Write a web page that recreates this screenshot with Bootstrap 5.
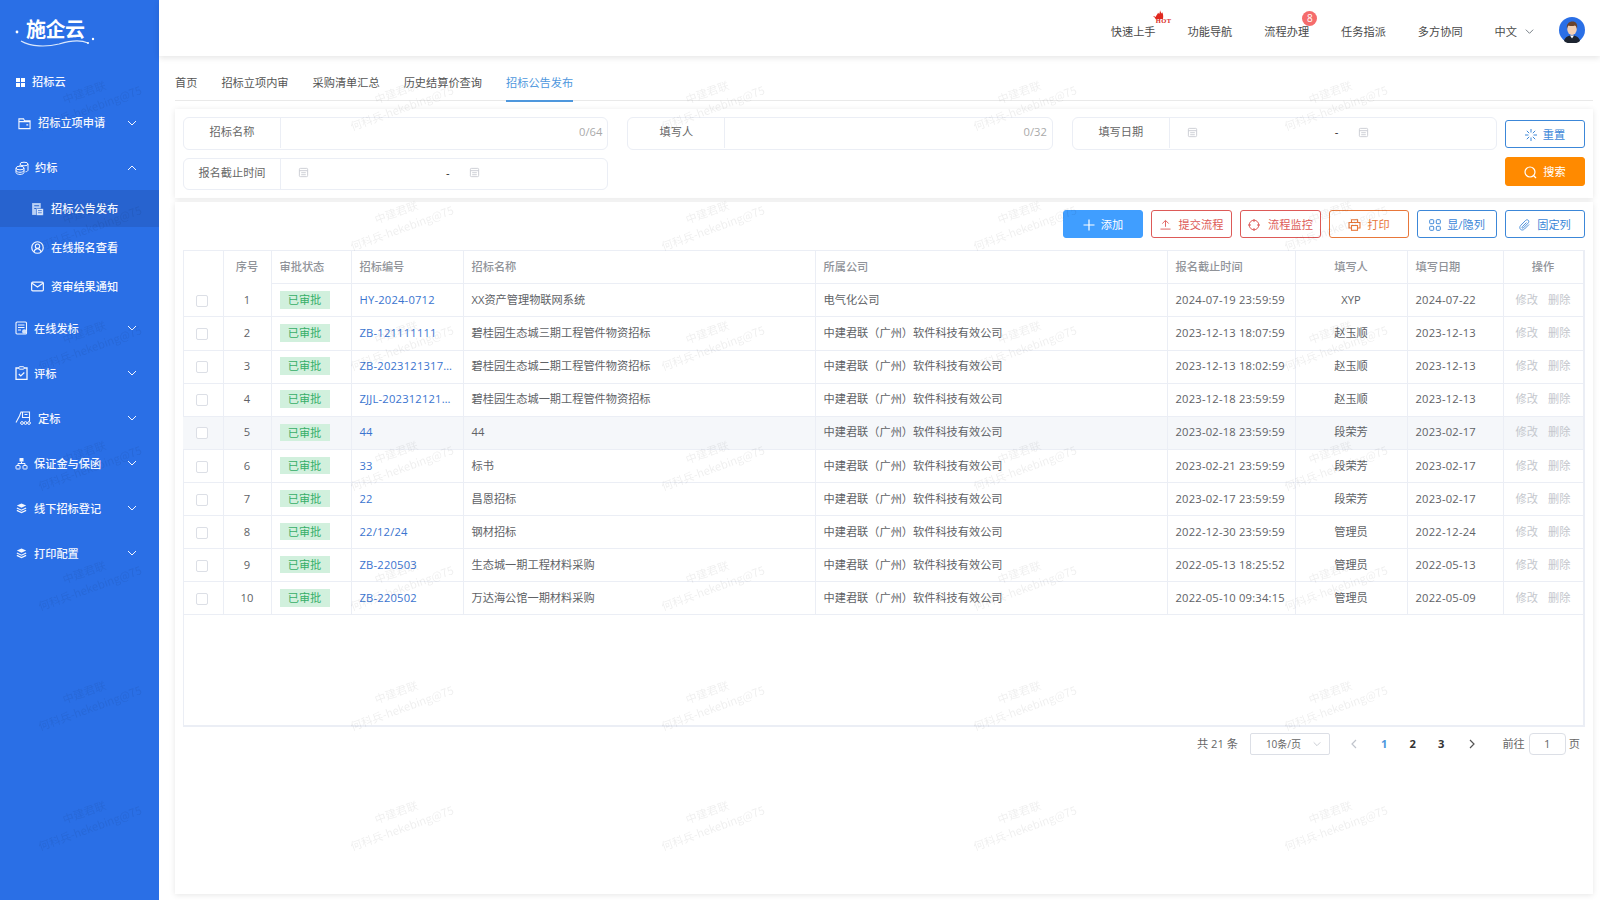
<!DOCTYPE html>
<html lang="zh-CN">
<head>
    <meta charset="UTF-8">
    <meta name="viewport" content="width=device-width, initial-scale=1.0">
    <title>招标公告发布</title>
    <link href="https://cdn.jsdelivr.net/npm/bootstrap@5.3.0/dist/css/bootstrap.min.css" rel="stylesheet">
    <style>
        body { height: 900px; overflow: hidden; background: #fff; color: #606266; font-family: "Open Sans", "Noto Sans CJK SC", sans-serif; font-size: 11.2px; line-height: 1.4; }
        svg { flex: none; display: block; }
        .side-bar { width: 159px; height: 900px; background: #2a6fe6; color: #f4f7fe; font-weight: 500; }
        .logo-box { height: 63px; position: relative; }
        .logo-text { position: absolute; left: 26px; top: 16px; font-size: 20px; font-weight: 700; color: #fff; letter-spacing: -.5px; line-height: 28px; }
        .logo-swoosh { position: absolute; left: 12px; top: 26px; }
        .side-item { height: 45px; padding-right: 21px; }
        .side-item.first { height: 38px; padding-left: 16px; gap: 7px; }
        .side-item.short { height: 44px; }
        .side-item.top { padding-left: 15px; gap: 6px; }
        .side-item.plain { padding-left: 18px; gap: 7px; }
        .side-sub { height: 38.6px; padding-left: 31px; gap: 7px; }
        .side-sub.on { background: #2763cf; height: 37px; margin-bottom: 1.7px; padding-top: 1px; }
        .main-pane { width: 1441px; }
        .top-bar { height: 56px; background: #fff; box-shadow: 0 2px 6px rgba(0,0,0,.1); color: #4a4a4a; padding: 8px 15px 0 0; position: relative; }
        .top-link { position: relative; margin-right: 32px; }
        .hot-tag { position: absolute; left: 42px; top: -14px; }
        .hot-word { position: absolute; left: 45px; top: -7px; font: 700 6.5px/7px "Liberation Serif", serif; color: #d9261c; letter-spacing: .4px; }
        .num-dot { position: absolute; left: 38px; top: -13px; width: 15px; height: 15px; border-radius: 50%; background: #f56c6c; color: #fff; font-size: 10px; line-height: 15px; text-align: center; }
        .lang-box { gap: 7px; margin-right: 24px; }
        .head-face { margin-top: -4px; }
        .body-pane { padding: 0 7px 0 16px; }
        .tab-row { height: 45px; border-bottom: 1px solid #e9e9e9; gap: 24px; color: #555; }
        .tab-link { height: 46px; padding-top: 19px; }
        .tab-link.on { color: #4e97dd; border-bottom: 2px solid #4e97dd; }
        .panel-box { background: #fff; box-shadow: 0 1px 6px rgba(0,0,0,.1); padding: 8px; }
        .filter-panel { margin-top: 8px; height: 89px; }
        .table-panel { margin-top: 4px; height: 692px; }
        .filter-wrap { width: 1316px; gap: 8px 19px; }
        .filter-field { width: 425.4px; height: 32.5px; border: 1px solid #ebeef5; border-radius: 6px; }
        .filter-label { width: 97px; height: 30px; border-right: 1px solid #ebeef5; color: #666; text-align: center; line-height: 28px; }
        .filter-count { margin-left: auto; margin-right: 5px; margin-bottom: 2px; color: #aaa; }
        .date-ico { color: #c9ccd2; margin-left: 17px; margin-bottom: 2px; }
        .date-dash { margin-left: 137px; color: #222; width: 15px; margin-bottom: 2px; }
        .date-dash + .date-ico { margin-left: 8px; }
        .btn-col { padding-top: 3px; }
        .act-btn { width: 80px; height: 28px; padding: 1px 0 0; border-radius: 3px; font-size: 11.2px; gap: 6px; display: flex; align-items: center; justify-content: center; }
        .act-blue { color: #3c87d8; border: 1px solid #3c87d8; background: #fff; }
        .act-red { color: #dd5a58; border: 1px solid #dd5a58; background: #fff; width: 81px; gap: 8px; }
        .act-orange { color: #e8773a; border: 1px solid #e8773a; background: #fff; }
        .act-fill { color: #fff; background: #409eff; border: 1px solid #409eff; }
        .act-search { color: #fff; background: #ff8a00; border: 1px solid #ff8a00; height: 29px; margin-top: 9px; }
        .tool-row { gap: 8px; }
        .table-wrap { margin-top: 12px; width: 1402px; height: 477px; border: 1px solid #ebeef5; border-right-width: 2px; border-bottom-width: 2px; border-top: 0; }
        .data-grid { width: 1400px; table-layout: fixed; margin: 0 0 0 -1px; font-size: 11.2px; --bs-table-color: #606266; }
        .data-grid th, .data-grid td { height: 33.1px; padding: 0 8px 1px; vertical-align: middle; border: 0; border-right: 1px solid #ebeef5; border-bottom: 1px solid #ebeef5; color: #606266; font-weight: 400; }
        .data-grid th { border-top: 1px solid #ebeef5; color: #909399; font-weight: 500; height: 33.4px; }
        .data-grid th.no-line { border-bottom: 0; }
        .data-grid tr.row-hover td { background: #f5f7fa; }
        .col-a { width: 40px; } .col-b { width: 48px; } .col-c { width: 80px; } .col-d { width: 112px; } .col-e { width: 352px; }
        .col-f { width: 128px; } .col-g { width: 96px; }
        .num-text { letter-spacing: .2px; }
        .data-grid .link-text { color: #3a74cf; }
        .state-tag { display: inline-block; width: 50px; height: 17.5px; line-height: 18px; background: #d1f0dd; color: #36ae68; text-align: center; }
        .op-text { color: #c4c7cd; }
        .op-text + .op-text { margin-left: 10px; }
        .data-grid .form-check-input { width: 12px; height: 12px; margin: 3px 0 0 5px; border-color: #dcdfe6; border-radius: 2px; }
        .page-row { margin-top: 5px; height: 24px; padding-right: 5px; color: #666; }
        .page-select { width: 80px; height: 22px; border: 1px solid #dcdfe6; border-radius: 2px; margin-left: 12px; padding: 0 7px 0 15px; font-size: 10px; }
        .page-prev { margin-left: 18px; color: #c0c4cc; }
        .page-next { margin-left: 11px; color: #555; }
        .select-arrow { color: #c0c4cc; }
        .page-num { width: 28.5px; text-align: center; font-weight: 700; color: #333; }
        .page-num.on { color: #4e97dd; margin-left: 10px; }
        .page-go { width: 37px; height: 22px; border: 1px solid #dcdfe6; border-radius: 4px; text-align: center; line-height: 20px; margin: 0 3px 0 4px; }
        .water-layer { position: fixed; inset: 0; pointer-events: none; overflow: hidden; z-index: 5; }
        .water-mark { position: absolute; width: 120px; transform: rotate(-20deg); color: rgba(0,0,0,.065); font-family: "Noto Sans CJK SC", sans-serif; font-size: 11.2px; line-height: 17px; text-align: center; white-space: nowrap; }
    </style>
</head>
<body>
    <svg width="0" height="0" class="position-absolute">
        <symbol id="i-down" viewBox="0 0 12 12"><path d="M2 4l4 4 4-4" fill="none" stroke="currentColor" stroke-width="1"/></symbol>
        <symbol id="i-up" viewBox="0 0 12 12"><path d="M2 8l4-4 4 4" fill="none" stroke="currentColor" stroke-width="1"/></symbol>
        <symbol id="i-date" viewBox="0 0 12 12"><rect x="1.5" y="1.5" width="9" height="9" rx="1" fill="none" stroke="currentColor"/><path d="M1.5 4h9M3.5 6.2h5M3.5 8.4h5" stroke="currentColor"/></symbol>
        <symbol id="i-stack" viewBox="0 0 14 14"><path d="M7 1.5l5 2.4-5 2.4-5-2.4z" fill="currentColor"/><path d="M2 6.4l5 2.4 5-2.4M2 9l5 2.4L12 9" fill="none" stroke="currentColor" stroke-width="1.3"/></symbol>
    </svg>

    <div class="d-flex">
        <aside class="side-bar">
            <div class="logo-box">
                <span class="logo-text">施企云</span>
                <svg class="logo-swoosh" width="84" height="24" viewBox="0 0 84 24"><circle cx="5" cy="6" r="1.4" fill="#fff"/><circle cx="81" cy="13" r="1.2" fill="#fff"/><path d="M9 15c10 6 26 6 38 3 10-3 20-5 29-1" fill="none" stroke="#dbe8fc" stroke-width="1.2"/><circle cx="76" cy="17" r="1" fill="#fff"/></svg>
            </div>
            <div class="side-item first d-flex align-items-center">
                <svg width="9" height="9" viewBox="0 0 9 9"><path d="M0 0h4v4H0zM5 0h4v4H5zM0 5h4v4H0zM5 5h4v4H5z" fill="#fff"/></svg>
                <span>招标云</span>
            </div>
            <div class="side-item short plain d-flex align-items-center">
                <svg width="13" height="13" viewBox="0 0 14 14"><path d="M1 12.5V2h5l1 2h6v8.5z" fill="none" stroke="currentColor" stroke-width="1.2"/><path d="M1 5h12M9 8.5h2" stroke="currentColor" stroke-width="1.2"/></svg>
                <span>招标立项申请</span>
                <svg class="ms-auto" width="12" height="12"><use href="#i-down"/></svg>
            </div>
            <div class="side-item top d-flex align-items-center">
                <svg width="14" height="14" viewBox="0 0 14 14"><ellipse cx="9" cy="3" rx="4" ry="1.8" fill="none" stroke="currentColor"/><path d="M13 3v6c0 1-1 1.6-2.5 1.8M5 4v1" fill="none" stroke="currentColor"/><ellipse cx="5" cy="7" rx="4" ry="1.8" fill="none" stroke="currentColor"/><path d="M1 7v4.5C1 12.600 3 13.400 5 13.400s4-.8 4-1.900V7M1 9.500c0 1 2 1.800 4 1.800s4-.8 4-1.800" fill="none" stroke="currentColor"/></svg>
                <span>约标</span>
                <svg class="ms-auto" width="12" height="12"><use href="#i-up"/></svg>
            </div>
            <div class="side-sub on d-flex align-items-center">
                <svg width="13" height="14" viewBox="0 0 12 13"><path d="M1 1h8v11H1z" fill="#b9d0f5"/><path d="M3 3.500h4.500M3 6h2" stroke="#2763cf"/><rect x="5" y="6" width="6.500" height="6.500" rx="1" fill="#dbe7fb" stroke="#2763cf" stroke-width=".6"/><path d="M6.500 8h3.500M6.500 10h3.500" stroke="#2763cf" stroke-width=".7"/></svg>
                <span>招标公告发布</span>
            </div>
            <div class="side-sub d-flex align-items-center">
                <svg width="13" height="13" viewBox="0 0 12 12"><circle cx="6" cy="6" r="5.300" fill="none" stroke="currentColor" stroke-width="1.100"/><circle cx="6" cy="4.800" r="2" fill="none" stroke="currentColor"/><path d="M2.800 10c.5-2 1.700-3 3.200-3s2.700 1 3.200 3" fill="none" stroke="currentColor"/></svg>
                <span>在线报名查看</span>
            </div>
            <div class="side-sub d-flex align-items-center">
                <svg width="13" height="13" viewBox="0 0 12 12"><rect x=".6" y="2" width="10.800" height="8" rx="1" fill="none" stroke="currentColor" stroke-width="1.100"/><path d="M1 3l5 3.500L11 3" fill="none" stroke="currentColor" stroke-width="1.100"/></svg>
                <span>资审结果通知</span>
            </div>
            <div class="side-item top d-flex align-items-center">
                <svg width="13" height="14" viewBox="0 0 13 14"><rect x="1" y="1" width="10.500" height="12" rx="1" fill="none" stroke="currentColor" stroke-width="1.100"/><path d="M3 4h6.500M3 6.500h6.500M3 9h3" stroke="currentColor"/><circle cx="9.300" cy="10.500" r="2.300" fill="#cfe0fb"/></svg>
                <span>在线发标</span>
                <svg class="ms-auto" width="12" height="12"><use href="#i-down"/></svg>
            </div>
            <div class="side-item top d-flex align-items-center">
                <svg width="13" height="14" viewBox="0 0 13 14"><path d="M4 2H1v11.400h11V2H9" fill="none" stroke="currentColor" stroke-width="1.300"/><rect x="4" y=".7" width="5" height="2.500" rx=".6" fill="none" stroke="currentColor"/><path d="M3.800 8l2 2 3.500-3.500" fill="none" stroke="currentColor" stroke-width="1.200"/></svg>
                <span>评标</span>
                <svg class="ms-auto" width="12" height="12"><use href="#i-down"/></svg>
            </div>
            <div class="side-item top d-flex align-items-center">
                <svg width="17" height="14" viewBox="0 0 17 14"><path d="M1 11.500L4.500 5 6 1h8.500v9M7.500 1.500v5h7M9.500 3.500h3" fill="none" stroke="currentColor" stroke-width="1.100"/><circle cx="7" cy="12" r="1.400" fill="none" stroke="currentColor"/><circle cx="10.500" cy="12" r="1.400" fill="none" stroke="currentColor"/><circle cx="14" cy="12" r="1.400" fill="none" stroke="currentColor"/></svg>
                <span>定标</span>
                <svg class="ms-auto" width="12" height="12"><use href="#i-down"/></svg>
            </div>
            <div class="side-item top d-flex align-items-center">
                <svg width="13" height="13" viewBox="0 0 13 13"><rect x="4.500" y="1" width="4" height="3.500" rx=".5" fill="currentColor"/><rect x="1" y="8.500" width="4" height="3.500" rx=".5" fill="none" stroke="currentColor"/><rect x="8" y="8.500" width="4" height="3.500" rx=".5" fill="none" stroke="currentColor"/><path d="M3 8.500V6.500h7v2M6.500 4.500v2" fill="none" stroke="currentColor"/></svg>
                <span>保证金与保函</span>
                <svg class="ms-auto" width="12" height="12"><use href="#i-down"/></svg>
            </div>
            <div class="side-item top d-flex align-items-center">
                <svg width="13" height="13"><use href="#i-stack"/></svg>
                <span>线下招标登记</span>
                <svg class="ms-auto" width="12" height="12"><use href="#i-down"/></svg>
            </div>
            <div class="side-item top d-flex align-items-center">
                <svg width="13" height="13"><use href="#i-stack"/></svg>
                <span>打印配置</span>
                <svg class="ms-auto" width="12" height="12"><use href="#i-down"/></svg>
            </div>
        </aside>

        <div class="main-pane">
            <header class="top-bar d-flex align-items-center justify-content-end">
                <div class="top-link">快速上手
                    <svg class="hot-tag" width="12" height="9" viewBox="0 0 12 9"><path d="M7 0c.2 1.500 1 2.200 1.300 3.500.5-.3.7-.8.7-1.500 1 1.500 1.600 3.500 1 7H2.500C2 7.500 1 6.800 0 6.500c1-.3 2-.1 2.800.4C3 5 4.800 4.500 5 2.800c.6.300.9.800 1 1.400C6.800 3 7 1.500 7 0z" fill="#e0281e"/></svg>
                    <span class="hot-word">HOT</span>
                </div>
                <div class="top-link">功能导航</div>
                <div class="top-link">流程办理<span class="num-dot">8</span></div>
                <div class="top-link">任务指派</div>
                <div class="top-link">多方协同</div>
                <div class="lang-box d-flex align-items-center">中文
                    <svg width="11" height="11" viewBox="0 0 12 12" class="text-secondary"><use href="#i-down"/></svg>
                </div>
                <svg class="head-face" width="26" height="26" viewBox="0 0 26 26">
                    <circle cx="13" cy="13" r="13" fill="#2a6fe6"/>
                    <path d="M5 24c1-4 4-5.500 8-5.500s7 1.500 8 5.500a13 13 0 0 1-16 0z" fill="#1d2430"/>
                    <path d="M11 18.500h4l-2 3z" fill="#fff"/>
                    <ellipse cx="13" cy="12" rx="4.800" ry="6" fill="#f2cfb4"/>
                    <path d="M8 12c-1-5 2-7.500 5.500-7.500S19 7 18 12c-.5-2-1-3-2-3.500-2 .7-5 .7-6.500 0-.8.800-1.200 2-1.500 3.500z" fill="#6b432c"/>
                </svg>
            </header>

            <div class="body-pane">
                <nav class="tab-row d-flex">
                    <div class="tab-link">首页</div>
                    <div class="tab-link">招标立项内审</div>
                    <div class="tab-link">采购清单汇总</div>
                    <div class="tab-link">历史结算价查询</div>
                    <div class="tab-link on">招标公告发布</div>
                </nav>

                <section class="panel-box filter-panel d-flex justify-content-between">
                    <div class="filter-wrap d-flex flex-wrap align-content-start">
                        <div class="filter-field d-flex align-items-center">
                            <div class="filter-label">招标名称</div>
                            <span class="filter-count">0/64</span>
                        </div>
                        <div class="filter-field d-flex align-items-center">
                            <div class="filter-label">填写人</div>
                            <span class="filter-count">0/32</span>
                        </div>
                        <div class="filter-field d-flex align-items-center">
                            <div class="filter-label">填写日期</div>
                            <svg class="date-ico" width="11" height="11"><use href="#i-date"/></svg>
                            <span class="date-dash">-</span>
                            <svg class="date-ico" width="11" height="11"><use href="#i-date"/></svg>
                        </div>
                        <div class="filter-field d-flex align-items-center">
                            <div class="filter-label">报名截止时间</div>
                            <svg class="date-ico" width="11" height="11"><use href="#i-date"/></svg>
                            <span class="date-dash">-</span>
                            <svg class="date-ico" width="11" height="11"><use href="#i-date"/></svg>
                        </div>
                    </div>
                    <div class="btn-col d-flex flex-column">
                        <button class="act-btn act-blue" type="button">
                            <svg width="12" height="12" viewBox="0 0 12 12"><path d="M6 0v3.500M6 8.500V12M0 6h3.500M8.500 6H12M1.800 1.800l2.400 2.400M7.800 7.800l2.400 2.400M10.200 1.800L7.800 4.200M4.200 7.800l-2.400 2.400" stroke="currentColor"/></svg>
                            重置
                        </button>
                        <button class="act-btn act-search" type="button">
                            <svg width="13" height="13" viewBox="0 0 13 13"><circle cx="6" cy="6" r="5" fill="none" stroke="currentColor" stroke-width="1.200"/><path d="M9.500 9.500l2.500 2.500" stroke="currentColor" stroke-width="1.200"/></svg>
                            搜索
                        </button>
                    </div>
                </section>

                <section class="panel-box table-panel">
                    <div class="tool-row d-flex justify-content-end">
                        <button class="act-btn act-fill" type="button">
                            <svg width="12" height="12" viewBox="0 0 12 12"><path d="M6 .5v11M.5 6h11" stroke="currentColor" stroke-width="1.200"/></svg>
                            添加
                        </button>
                        <button class="act-btn act-red" type="button">
                            <svg width="11" height="11" viewBox="0 0 12 12"><path d="M2.500 5L6 1.500 9.500 5M6 2v6.500M.5 11h11" fill="none" stroke="currentColor"/></svg>
                            提交流程
                        </button>
                        <button class="act-btn act-red" type="button">
                            <svg width="12" height="12" viewBox="0 0 12 12"><circle cx="6" cy="6" r="4.800" fill="none" stroke="currentColor"/><path d="M6 0v3M6 9v3M0 6h3M9 6h3" stroke="currentColor"/></svg>
                            流程监控
                        </button>
                        <button class="act-btn act-orange" type="button">
                            <svg width="13" height="12" viewBox="0 0 13 12"><path d="M3.500 3.500V.7h6v2.800M3.500 9H1V3.500h11V9H9.500" fill="none" stroke="currentColor" stroke-width="1.100"/><rect x="3.500" y="6.500" width="6" height="4.800" fill="none" stroke="currentColor" stroke-width="1.100"/></svg>
                            打印
                        </button>
                        <button class="act-btn act-blue" type="button">
                            <svg width="12" height="12" viewBox="0 0 12 12"><g fill="none" stroke="currentColor"><rect x=".7" y=".7" width="4" height="4" rx=".8"/><rect x="7.300" y=".7" width="4" height="4" rx=".8"/><rect x=".7" y="7.300" width="4" height="4" rx=".8"/><rect x="7.300" y="7.300" width="4" height="4" rx=".8"/></g></svg>
                            显/隐列
                        </button>
                        <button class="act-btn act-blue" type="button">
                            <svg width="12" height="12" viewBox="0 0 12 12"><path d="M10 5.500L5.500 10c-1.300 1.300-3 1.300-4 .3s-1-2.700.3-4l4.700-4.800c.9-.9 2.100-.9 2.800-.2s.7 1.900-.2 2.800L4.500 8.800c-.5.5-1 .5-1.300.2s-.3-.8.2-1.300L7.500 3.500" fill="none" stroke="currentColor" stroke-width=".9"/></svg>
                            固定列
                        </button>
                    </div>

                    <div class="table-wrap">
                        <table class="table data-grid">
                            <colgroup><col class="col-a"><col class="col-b"><col class="col-c"><col class="col-d"><col class="col-e"><col class="col-e"><col class="col-f"><col class="col-d"><col class="col-g"><col class="col-c"></colgroup>
                            <thead>
                                <tr>
                                    <th class="no-line"></th>
                                    <th class="no-line text-center">序号</th>
                                    <th>审批状态</th>
                                    <th>招标编号</th>
                                    <th>招标名称</th>
                                    <th>所属公司</th>
                                    <th>报名截止时间</th>
                                    <th class="text-center">填写人</th>
                                    <th>填写日期</th>
                                    <th class="text-center">操作</th>
                                </tr>
                            </thead>
                            <tbody>
                                <tr><td><input class="form-check-input" type="checkbox"></td><td class="text-center">1</td><td><span class="state-tag">已审批</span></td><td class="text-truncate link-text num-text">HY-2024-0712</td><td>XX资产管理物联网系统</td><td>电气化公司</td><td class="num-text">2024-07-19 23:59:59</td><td class="text-center">XYP</td><td class="num-text">2024-07-22</td><td class="text-nowrap text-center"><span class="op-text">修改</span><span class="op-text">删除</span></td></tr>
                                <tr><td><input class="form-check-input" type="checkbox"></td><td class="text-center">2</td><td><span class="state-tag">已审批</span></td><td class="text-truncate link-text num-text">ZB-121111111</td><td>碧桂园生态城三期工程管件物资招标</td><td>中建君联（广州）软件科技有效公司</td><td class="num-text">2023-12-13 18:07:59</td><td class="text-center">赵玉顺</td><td class="num-text">2023-12-13</td><td class="text-nowrap text-center"><span class="op-text">修改</span><span class="op-text">删除</span></td></tr>
                                <tr><td><input class="form-check-input" type="checkbox"></td><td class="text-center">3</td><td><span class="state-tag">已审批</span></td><td class="text-truncate link-text num-text">ZB-20231213170001</td><td>碧桂园生态城二期工程管件物资招标</td><td>中建君联（广州）软件科技有效公司</td><td class="num-text">2023-12-13 18:02:59</td><td class="text-center">赵玉顺</td><td class="num-text">2023-12-13</td><td class="text-nowrap text-center"><span class="op-text">修改</span><span class="op-text">删除</span></td></tr>
                                <tr><td><input class="form-check-input" type="checkbox"></td><td class="text-center">4</td><td><span class="state-tag">已审批</span></td><td class="text-truncate link-text num-text">ZJJL-20231212100001</td><td>碧桂园生态城一期工程管件物资招标</td><td>中建君联（广州）软件科技有效公司</td><td class="num-text">2023-12-18 23:59:59</td><td class="text-center">赵玉顺</td><td class="num-text">2023-12-13</td><td class="text-nowrap text-center"><span class="op-text">修改</span><span class="op-text">删除</span></td></tr>
                                <tr class="row-hover"><td><input class="form-check-input" type="checkbox"></td><td class="text-center">5</td><td><span class="state-tag">已审批</span></td><td class="text-truncate link-text num-text">44</td><td>44</td><td>中建君联（广州）软件科技有效公司</td><td class="num-text">2023-02-18 23:59:59</td><td class="text-center">段荣芳</td><td class="num-text">2023-02-17</td><td class="text-nowrap text-center"><span class="op-text">修改</span><span class="op-text">删除</span></td></tr>
                                <tr><td><input class="form-check-input" type="checkbox"></td><td class="text-center">6</td><td><span class="state-tag">已审批</span></td><td class="text-truncate link-text num-text">33</td><td>标书</td><td>中建君联（广州）软件科技有效公司</td><td class="num-text">2023-02-21 23:59:59</td><td class="text-center">段荣芳</td><td class="num-text">2023-02-17</td><td class="text-nowrap text-center"><span class="op-text">修改</span><span class="op-text">删除</span></td></tr>
                                <tr><td><input class="form-check-input" type="checkbox"></td><td class="text-center">7</td><td><span class="state-tag">已审批</span></td><td class="text-truncate link-text num-text">22</td><td>昌恩招标</td><td>中建君联（广州）软件科技有效公司</td><td class="num-text">2023-02-17 23:59:59</td><td class="text-center">段荣芳</td><td class="num-text">2023-02-17</td><td class="text-nowrap text-center"><span class="op-text">修改</span><span class="op-text">删除</span></td></tr>
                                <tr><td><input class="form-check-input" type="checkbox"></td><td class="text-center">8</td><td><span class="state-tag">已审批</span></td><td class="text-truncate link-text num-text">22/12/24</td><td>钢材招标</td><td>中建君联（广州）软件科技有效公司</td><td class="num-text">2022-12-30 23:59:59</td><td class="text-center">管理员</td><td class="num-text">2022-12-24</td><td class="text-nowrap text-center"><span class="op-text">修改</span><span class="op-text">删除</span></td></tr>
                                <tr><td><input class="form-check-input" type="checkbox"></td><td class="text-center">9</td><td><span class="state-tag">已审批</span></td><td class="text-truncate link-text num-text">ZB-220503</td><td>生态城一期工程材料采购</td><td>中建君联（广州）软件科技有效公司</td><td class="num-text">2022-05-13 18:25:52</td><td class="text-center">管理员</td><td class="num-text">2022-05-13</td><td class="text-nowrap text-center"><span class="op-text">修改</span><span class="op-text">删除</span></td></tr>
                                <tr><td><input class="form-check-input" type="checkbox"></td><td class="text-center">10</td><td><span class="state-tag">已审批</span></td><td class="text-truncate link-text num-text">ZB-220502</td><td>万达海公馆一期材料采购</td><td>中建君联（广州）软件科技有效公司</td><td class="num-text">2022-05-10 09:34:15</td><td class="text-center">管理员</td><td class="num-text">2022-05-09</td><td class="text-nowrap text-center"><span class="op-text">修改</span><span class="op-text">删除</span></td></tr>
                            </tbody>
                        </table>
                    </div>

                    <div class="page-row d-flex align-items-center justify-content-end">
                        <span>共 21 条</span>
                        <div class="page-select d-flex align-items-center justify-content-between">10条/页
                            <svg class="select-arrow" width="10" height="10" viewBox="0 0 12 12"><use href="#i-down"/></svg>
                        </div>
                        <svg class="page-prev" width="12" height="12" viewBox="0 0 12 12"><path d="M8 2L4 6l4 4" fill="none" stroke="currentColor" stroke-width="1.200"/></svg>
                        <span class="page-num on">1</span>
                        <span class="page-num">2</span>
                        <span class="page-num">3</span>
                        <svg class="page-next" width="12" height="12" viewBox="0 0 12 12"><path d="M4 2l4 4-4 4" fill="none" stroke="currentColor" stroke-width="1.200"/></svg>
                        <span class="ms-4">前往</span>
                        <div class="page-go">1</div>
                        <span>页</span>
                    </div>
                </section>
            </div>
        </div>
    </div>

    <div class="water-layer" id="waterLayer"></div>

    <script src="https://cdn.jsdelivr.net/npm/bootstrap@5.3.0/dist/js/bootstrap.bundle.min.js"></script>
    <script>
        // repeat the watermark over the whole page
        const layer = document.getElementById('waterLayer');
        for (let r = 0; r < 7; r++) {
            for (let c = 0; c < 5; c++) {
                const m = document.createElement('div');
                m.className = 'water-mark';
                m.style.left = (27 + c * 311.5) + 'px';
                m.style.top = (83 + r * 120) + 'px';
                m.innerHTML = '中建君联<br>何科兵-hekebing@75';
                layer.appendChild(m);
            }
        }
    </script>
</body>
</html>
